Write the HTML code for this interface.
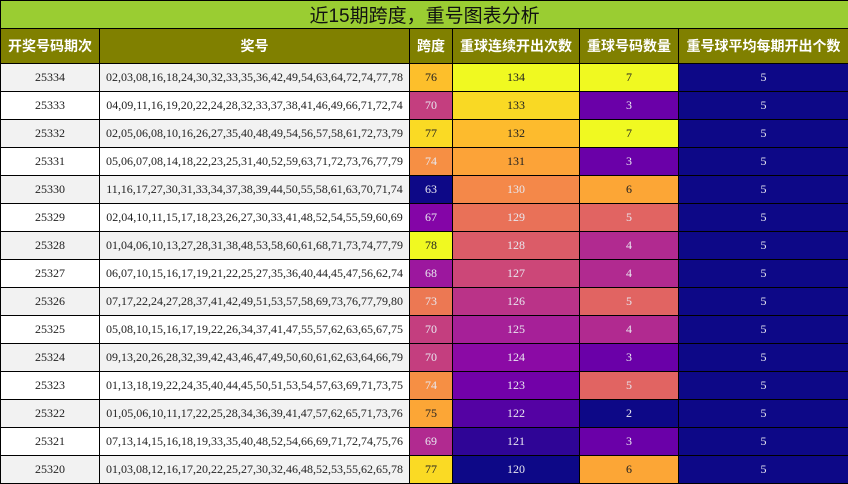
<!DOCTYPE html>
<html><head><meta charset="utf-8"><style>
html,body{margin:0;padding:0;background:#fff;}
table{border-collapse:collapse;table-layout:fixed;width:848px;}
td,th{border:1px solid #000;padding:0;text-align:center;overflow:hidden;white-space:nowrap;}
.t{height:27px;background:#9acd32;font:19px "Liberation Sans","Noto Sans CJK SC",sans-serif;color:#111;}
th{height:34px;background:#808000;color:#fff;font:bold 14px "Liberation Sans","Noto Sans CJK SC",sans-serif;}
td{height:27px;font:12px "Liberation Serif","Noto Serif CJK SC",serif;color:#222;}
tr.o td.a{background:#f2f2f2;}
.w{color:#e8e8f0;}
</style></head><body>
<table>
<col style="width:99px"><col style="width:310px"><col style="width:43px"><col style="width:127px"><col style="width:99px"><col style="width:170px">
<tr><td class="t" colspan="6">近15期跨度，重号图表分析</td></tr>
<tr><th>开奖号码期次</th><th>奖号</th><th>跨度</th><th>重球连续开出次数</th><th>重球号码数量</th><th>重号球平均每期开出个数</th></tr>
<tr class="o"><td class="a">25334</td><td class="a">02,03,08,16,18,24,30,32,33,35,36,42,49,54,63,64,72,74,77,78</td><td style="background:#fdbf2b">76</td><td style="background:#f0f921">134</td><td style="background:#f0f921">7</td><td class="w" style="background:#0d0887">5</td></tr>
<tr><td class="a">25333</td><td class="a">04,09,11,16,19,20,22,24,28,32,33,37,38,41,46,49,66,71,72,74</td><td class="w" style="background:#c43e7f">70</td><td style="background:#f9d924">133</td><td class="w" style="background:#6a00a8">3</td><td class="w" style="background:#0d0887">5</td></tr>
<tr class="o"><td class="a">25332</td><td class="a">02,05,06,08,10,16,26,27,35,40,48,49,54,56,57,58,61,72,73,79</td><td style="background:#fada24">77</td><td style="background:#fdbb2d">132</td><td style="background:#f0f921">7</td><td class="w" style="background:#0d0887">5</td></tr>
<tr><td class="a">25331</td><td class="a">05,06,07,08,14,18,22,23,25,31,40,52,59,63,71,72,73,76,77,79</td><td class="w" style="background:#f68f44">74</td><td style="background:#fca338">131</td><td class="w" style="background:#6a00a8">3</td><td class="w" style="background:#0d0887">5</td></tr>
<tr class="o"><td class="a">25330</td><td class="a">11,16,17,27,30,31,33,34,37,38,39,44,50,55,58,61,63,70,71,74</td><td class="w" style="background:#0d0887">63</td><td class="w" style="background:#f48849">130</td><td style="background:#fca636">6</td><td class="w" style="background:#0d0887">5</td></tr>
<tr><td class="a">25329</td><td class="a">02,04,10,11,15,17,18,23,26,27,30,33,41,48,52,54,55,59,60,69</td><td class="w" style="background:#8405a7">67</td><td class="w" style="background:#e97158">129</td><td class="w" style="background:#e16462">5</td><td class="w" style="background:#0d0887">5</td></tr>
<tr class="o"><td class="a">25328</td><td class="a">01,04,06,10,13,27,28,31,38,48,53,58,60,61,68,71,73,74,77,79</td><td style="background:#f0f921">78</td><td class="w" style="background:#db5c68">128</td><td class="w" style="background:#b12a90">4</td><td class="w" style="background:#0d0887">5</td></tr>
<tr><td class="a">25327</td><td class="a">06,07,10,15,16,17,19,21,22,25,27,35,36,40,44,45,47,56,62,74</td><td class="w" style="background:#9c179e">68</td><td class="w" style="background:#cc4778">127</td><td class="w" style="background:#b12a90">4</td><td class="w" style="background:#0d0887">5</td></tr>
<tr class="o"><td class="a">25326</td><td class="a">07,17,22,24,27,28,37,41,42,49,51,53,57,58,69,73,76,77,79,80</td><td class="w" style="background:#ec7853">73</td><td class="w" style="background:#ba3388">126</td><td class="w" style="background:#e16462">5</td><td class="w" style="background:#0d0887">5</td></tr>
<tr><td class="a">25325</td><td class="a">05,08,10,15,16,17,19,22,26,34,37,41,47,55,57,62,63,65,67,75</td><td class="w" style="background:#c43e7f">70</td><td class="w" style="background:#a62098">125</td><td class="w" style="background:#b12a90">4</td><td class="w" style="background:#0d0887">5</td></tr>
<tr class="o"><td class="a">25324</td><td class="a">09,13,20,26,28,32,39,42,43,46,47,49,50,60,61,62,63,64,66,79</td><td class="w" style="background:#c43e7f">70</td><td class="w" style="background:#8b0aa5">124</td><td class="w" style="background:#6a00a8">3</td><td class="w" style="background:#0d0887">5</td></tr>
<tr><td class="a">25323</td><td class="a">01,13,18,19,22,24,35,40,44,45,50,51,53,54,57,63,69,71,73,75</td><td class="w" style="background:#f68f44">74</td><td class="w" style="background:#7201a8">123</td><td class="w" style="background:#e16462">5</td><td class="w" style="background:#0d0887">5</td></tr>
<tr class="o"><td class="a">25322</td><td class="a">01,05,06,10,11,17,22,25,28,34,36,39,41,47,57,62,65,71,73,76</td><td style="background:#fca636">75</td><td class="w" style="background:#5402a3">122</td><td class="w" style="background:#0d0887">2</td><td class="w" style="background:#0d0887">5</td></tr>
<tr><td class="a">25321</td><td class="a">07,13,14,15,16,18,19,33,35,40,48,52,54,66,69,71,72,74,75,76</td><td class="w" style="background:#b12a90">69</td><td class="w" style="background:#2f0596">121</td><td class="w" style="background:#6a00a8">3</td><td class="w" style="background:#0d0887">5</td></tr>
<tr class="o"><td class="a">25320</td><td class="a">01,03,08,12,16,17,20,22,25,27,30,32,46,48,52,53,55,62,65,78</td><td style="background:#fada24">77</td><td class="w" style="background:#0d0887">120</td><td style="background:#fca636">6</td><td class="w" style="background:#0d0887">5</td></tr>
</table>
</body></html>
